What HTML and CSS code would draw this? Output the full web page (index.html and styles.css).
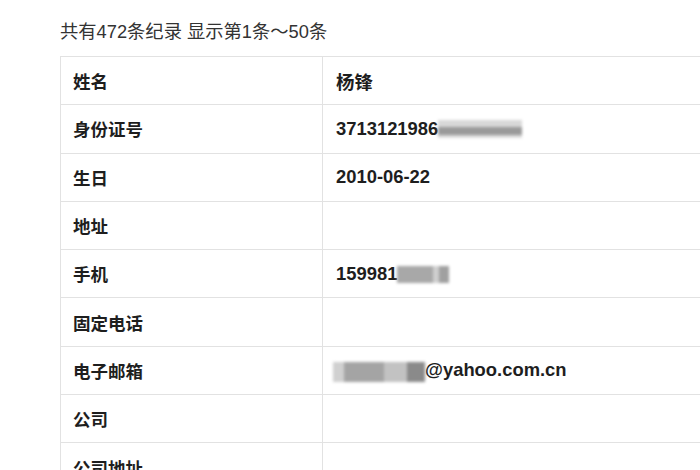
FILE: index.html
```html
<!DOCTYPE html>
<html lang="zh">
<head>
<meta charset="utf-8">
<link rel="stylesheet" href="styles.css">
</head>
<body>
<div class="page">
  <p class="summary">共有472条纪录 显示第1条～50条</p>
  <table class="record">
    <tr><td class="label">姓名</td><td class="value">杨锋</td></tr>
    <tr><td class="label">身份证号</td><td class="value">3713121986<span class="blur blur-id"></span></td></tr>
    <tr><td class="label">生日</td><td class="value">2010-06-22</td></tr>
    <tr><td class="label">地址</td><td class="value"></td></tr>
    <tr><td class="label">手机</td><td class="value">159981<span class="blur blur-phone"></span></td></tr>
    <tr><td class="label">固定电话</td><td class="value"></td></tr>
    <tr><td class="label">电子邮箱</td><td class="value"><span class="blur blur-mail"></span>@yahoo.com.cn</td></tr>
    <tr><td class="label">公司</td><td class="value"></td></tr>
    <tr><td class="label">公司地址</td><td class="value"></td></tr>
  </table>
</div>
</body>
</html>
```

FILE: styles.css
```css
html, body {
  margin: 0;
  padding: 0;
  background: #fff;
  overflow: hidden;
  height: 470px;
}
.page {
  padding: 20px 0 0 60px;
  font-family: "Liberation Sans", "Noto Sans CJK SC", sans-serif;
}
.summary {
  margin: 0 0 12px 0;
  font-size: 18.3px;
  line-height: 24px;
  color: #333;
}
.record {
  border-collapse: collapse;
  width: 700px;
  table-layout: fixed;
}
.record td {
  border: 1px solid #e2e2e2;
  height: 47.3px;
  padding: 0;
  font-weight: bold;
  color: #1e1e1e;
  vertical-align: middle;
  white-space: nowrap;
}
.record .label {
  width: 249px;
  padding-left: 12px;
  font-size: 17.5px;
}
.record .value {
  padding-left: 13px;
  font-size: 18.4px;
}
.blur {
  display: inline-block;
  vertical-align: middle;
  filter: blur(1.5px);
}
.blur-id {
  width: 84px;
  height: 18px;
  background: linear-gradient(#d8d8d8 0 40%, #9a9a9a 40% 85%, #dcdcdc 85%);
  margin-top: -3px;
}
.blur-phone {
  width: 52px;
  height: 17px;
  background: linear-gradient(90deg, #a8a8a8 0 70%, #cfcfcf 70% 80%, #a0a0a0 80%);
}
.blur-mail {
  width: 92px;
  height: 20px;
  margin-left: -3px;
  background: linear-gradient(90deg, #d0d0d0 0 12%, #a4a4a4 12% 55%, #c2c2c2 55% 80%, #8a8a8a 80%);
}
```
